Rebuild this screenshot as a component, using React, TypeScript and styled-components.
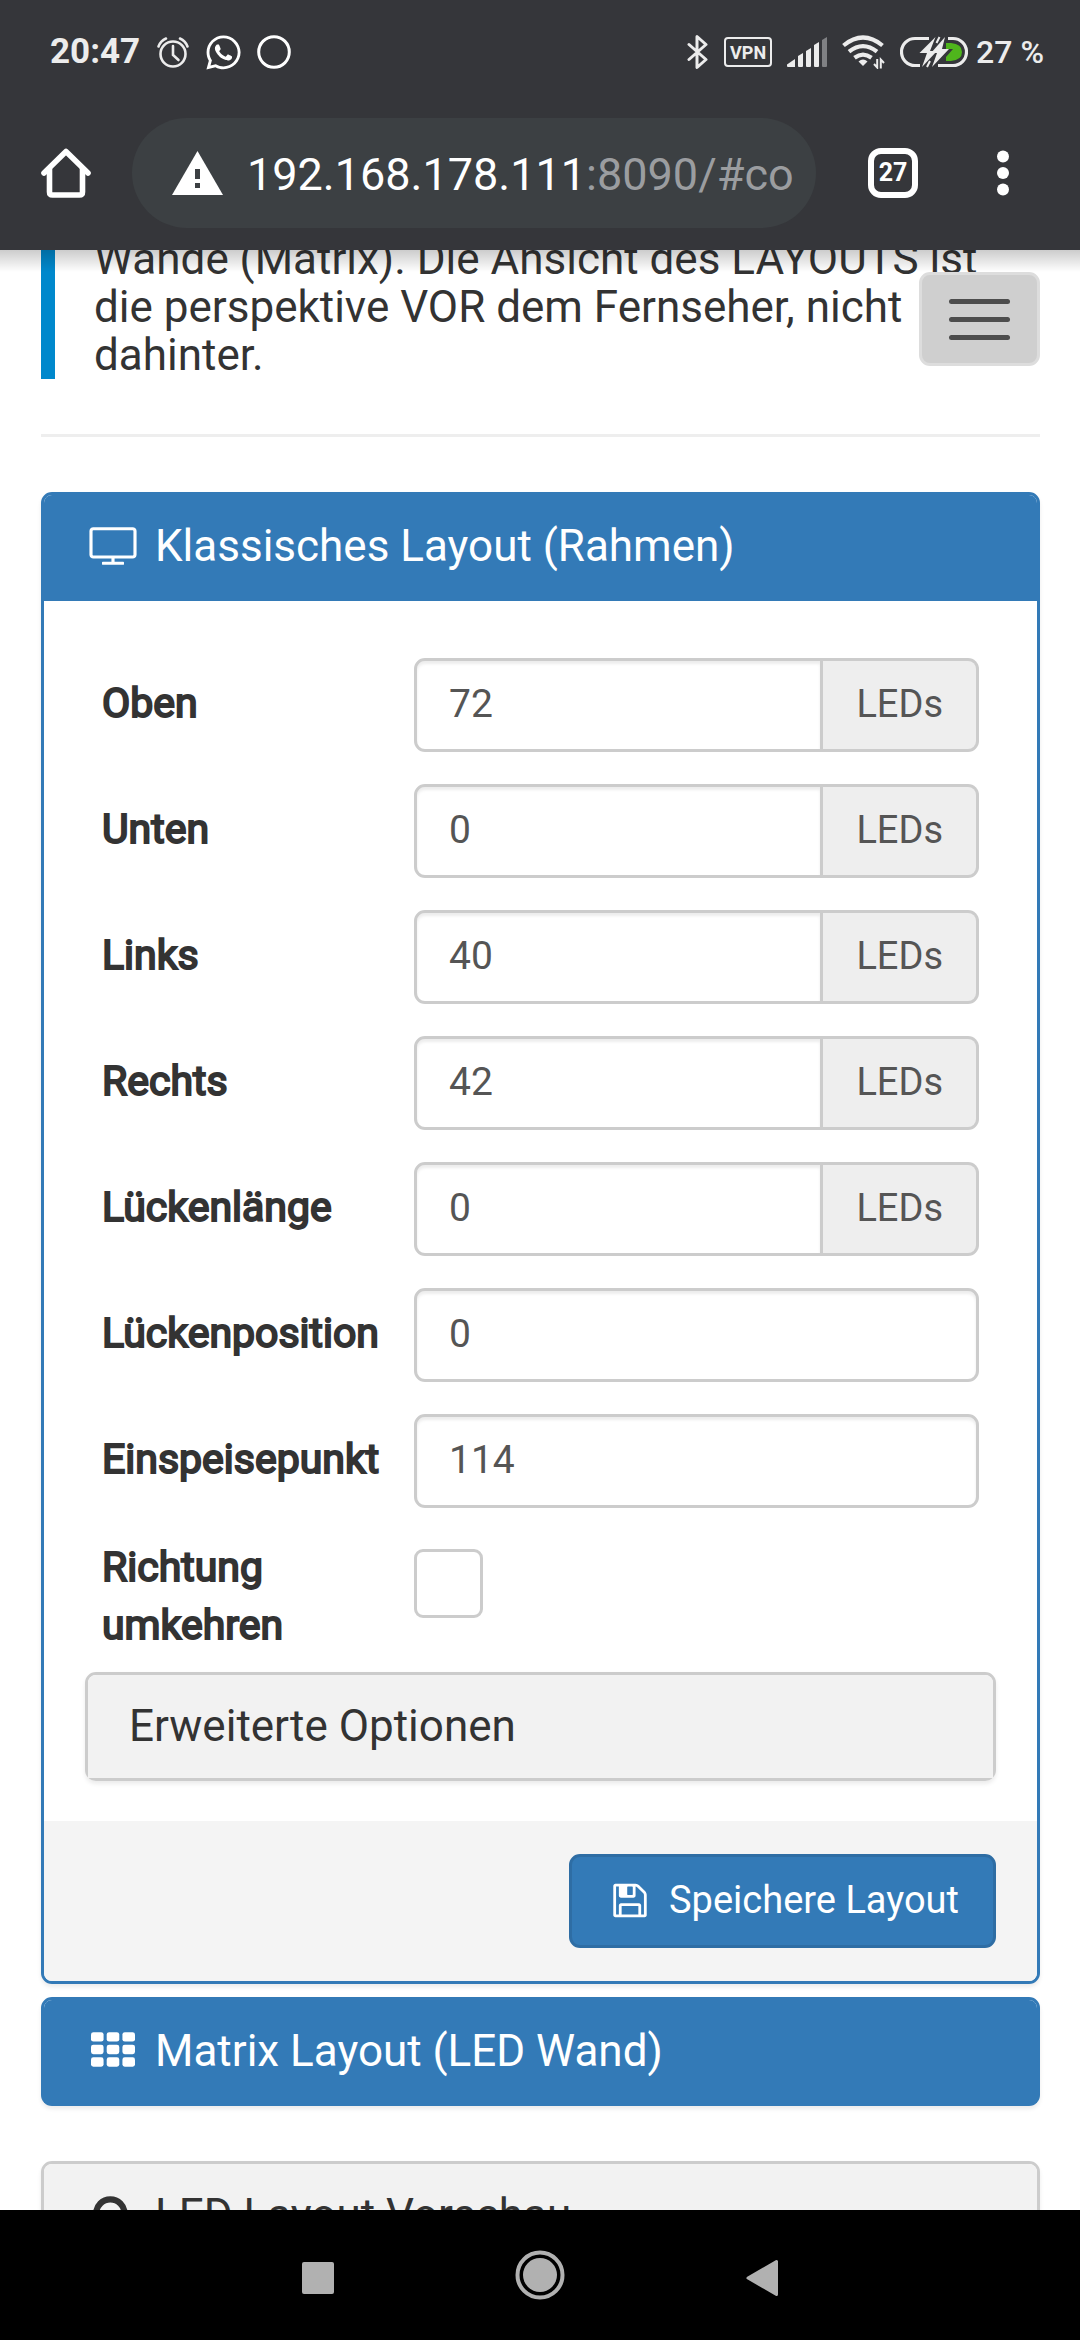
import React from 'react';
import styled, { createGlobalStyle } from 'styled-components';
import { FaWhatsapp } from 'react-icons/fa';

const GlobalStyle = createGlobalStyle`
  *, *::before, *::after { box-sizing: border-box; }
  html, body { margin: 0; background: #fff; }
  body { font-family: Roboto, "Liberation Sans", sans-serif; color: #333; }
  button, input { font: inherit; color: inherit; margin: 0; }
  button { border: 0; padding: 0; background: none; text-align: left; cursor: pointer; }
  svg { display: block; flex: none; }
`;

const Screen = styled.div`
  display: flex;
  flex-direction: column;
  height: 100vh;
  overflow: hidden;
`;

const BrowserHeader = styled.header`
  position: relative;
  z-index: 2;
  flex: none;
  background: #35363a;
  color: #fff;

  &::after {
    content: '';
    position: absolute;
    top: 100%;
    left: 0;
    right: 0;
    height: 22px;
    background: linear-gradient(rgba(0, 0, 0, 0.2), rgba(0, 0, 0, 0));
    pointer-events: none;
  }
`;

const StatusBar = styled.div`
  display: flex;
  align-items: center;
  justify-content: space-between;
  height: 104px;
  padding: 0 36px 0 50px;
  color: #ececec;
`;

const StatusGroup = styled.div<{ $gap: number }>`
  display: flex;
  align-items: center;
  gap: ${(p) => p.$gap}px;
`;

const Clock = styled.span`
  font-size: 35px;
  line-height: 40px;
  font-weight: 700;
`;

const BatteryLevel = styled.span`
  font-size: 32px;
  line-height: 40px;
  font-weight: 500;
`;

const VpnBadge = styled.span`
  display: flex;
  align-items: center;
  justify-content: center;
  width: 48px;
  height: 30px;
  border: 2px solid #ececec;
  border-radius: 4px;
  font-size: 18px;
  font-weight: 700;
`;

const BatteryGroup = styled.div`
  display: flex;
  align-items: center;
  gap: 8px;
`;

const Toolbar = styled.div`
  display: flex;
  align-items: center;
  padding: 14px 40px 22px;
`;

const IconButton = styled.button`
  flex: none;
  color: #fff;
`;

const AddressBar = styled.button`
  flex: 1;
  min-width: 0;
  display: flex;
  align-items: center;
  gap: 24px;
  height: 110px;
  margin: 0 52px 0 40px;
  padding: 0 20px 0 40px;
  border-radius: 55px;
  background: #3c4043;
  color: #fff;
  font-size: 45px;
  line-height: 56px;
  white-space: nowrap;
`;

const AddressText = styled.span`
  padding-top: 3px;
`;

const AddressPath = styled.span`
  color: #9b9da0;
`;

const TabCounter = styled.button`
  flex: none;
  width: 50px;
  height: 50px;
  border: 6px solid #fff;
  border-radius: 13px;
  margin-right: 48px;
  text-align: center;
  font-size: 25px;
  line-height: 38px;
  font-weight: 700;
  color: #fff;
`;

const Viewport = styled.main`
  position: relative;
  flex: 1;
  min-height: 0;
  overflow: hidden;
  padding: 0 40px 0 41px;
`;

const Callout = styled.p`
  margin: -15px 0 0;
  padding: 0 40px 0 39px;
  border-left: 14px solid #0088cc;
  font-size: 44px;
  line-height: 48px;
`;

const Divider = styled.hr`
  height: 3px;
  margin: 55px 0;
  border: 0;
  background: #eee;
`;

const MenuToggle = styled.button`
  position: absolute;
  top: 22px;
  right: 40px;
  display: flex;
  flex-direction: column;
  align-items: center;
  justify-content: center;
  gap: 13px;
  width: 121px;
  height: 94px;
  border: 3px solid #ddd;
  border-radius: 11px;
  background: #cfcfcf;
`;

const MenuBar = styled.span`
  width: 61px;
  height: 5px;
  border-radius: 3px;
  background: #4d4d4d;
`;

type Tone = 'primary' | 'plain';

const tones = {
  primary: { line: '#337ab7', fill: '#337ab7', text: '#fff' },
  plain: { line: '#ccc', fill: '#f2f2f2', text: '#333' },
};

const Panel = styled.section<{ $tone: Tone; $gap?: number }>`
  margin-bottom: ${(p) => p.$gap ?? 0}px;
  border: 3px solid ${(p) => tones[p.$tone].line};
  border-radius: 11px;
  background: #fff;
  box-shadow: 0 3px 4px rgba(0, 0, 0, 0.08);
`;

const PanelHeading = styled.h2<{ $tone: Tone; $open?: boolean }>`
  margin: 0;
  border-bottom: ${(p) => (p.$open ? 3 : 0)}px solid ${(p) => tones[p.$tone].line};
  border-radius: 8px 8px 0 0;
  background: ${(p) => tones[p.$tone].fill};
  color: ${(p) => tones[p.$tone].text};
  font-size: 44px;
  line-height: 48px;
  font-weight: 400;
`;

const PanelToggle = styled.button`
  display: flex;
  align-items: center;
  gap: 14px;
  width: 100%;
  padding: 27px 41px 28px;
`;

const HeadingIcon = styled.span`
  display: flex;
  justify-content: center;
  width: 56px;
  height: 44px;
`;

const PanelBody = styled.div`
  padding: 41px 41px 40px;
`;

const FormRow = styled.div`
  display: grid;
  grid-template-columns: 312px minmax(0, 1fr);
  align-items: center;
  padding: 16px 17px;
`;

const FieldLabel = styled.label`
  margin: -2px 0 2px;
  font-size: 41px;
  line-height: 58px;
  -webkit-text-stroke: 2px #333;
`;

const InputGroup = styled.div`
  display: flex;
  height: 94px;
`;

const NumberInput = styled.input<{ $joined: boolean }>`
  flex: 1;
  min-width: 0;
  width: 100%;
  padding: 0 32px 2px;
  border: 3px solid #ccc;
  border-radius: ${(p) => (p.$joined ? '11px 0 0 11px' : '11px')};
  background: #fff;
  box-shadow: inset 0 3px 3px rgba(0, 0, 0, 0.075);
  color: #555;
  font-size: 39px;
  outline: none;
`;

const Unit = styled.span`
  flex: none;
  display: flex;
  align-items: center;
  padding: 0 33px 3px;
  border: 3px solid #ccc;
  border-left: 0;
  border-radius: 0 11px 11px 0;
  background: #eee;
  color: #555;
  font-size: 38px;
`;

const Checkbox = styled.input`
  appearance: none;
  align-self: start;
  width: 69px;
  height: 69px;
  margin: 9px 0 0;
  border: 3px solid #ccc;
  border-radius: 9px;
  background: #fff;

  &:checked { background: #337ab7; }
`;

const PanelFooter = styled.div`
  display: flex;
  justify-content: flex-end;
  padding: 33px 41px;
  border-radius: 0 0 8px 8px;
  background: #f4f4f4;
`;

const SaveButton = styled.button`
  display: flex;
  align-items: center;
  gap: 22px;
  height: 94px;
  padding: 0 34px 2px 41px;
  border: 3px solid #2e6da4;
  border-radius: 11px;
  background: #337ab7;
  color: #fff;
  font-size: 38px;
`;

const NavBar = styled.nav`
  flex: none;
  display: flex;
  justify-content: center;
  height: 130px;
  background: #000;
`;

const NavButton = styled.button`
  display: flex;
  align-items: center;
  justify-content: center;
  width: 222px;
  color: #b1b1b1;
`;

const AlarmIcon = () => (
  <svg width="36" height="34" viewBox="-2 0 36 34" fill="none" stroke="#ececec" strokeWidth="2.6" strokeLinecap="round">
    <circle cx="17" cy="19" r="12.5" />
    <path d="M17 11v9l5.5 5M2.5 11.5c1.5-4 4-6.500 7.500-8M31.500 11.500c-1.500-4-4-6.500-7.500-8" />
  </svg>
);

const RingIcon = () => (
  <svg width="34" height="34" viewBox="0 0 34 34" fill="none" stroke="#fff" strokeWidth="3">
    <circle cx="17" cy="17" r="15.300" />
  </svg>
);

const BluetoothIcon = () => (
  <svg width="22" height="36" viewBox="0 0 22 36" fill="none" stroke="#ececec" strokeWidth="3" strokeLinejoin="round" strokeLinecap="round">
    <path d="M2 10.500l17 15-9 8v-31l9 8-17 15" />
  </svg>
);

const SignalIcon = () => (
  <svg width="40" height="30" viewBox="0 0 40 30" fill="#ececec">
    <path d="M0 27.500l8-5.500v8H1q-1 0-1-1z" />
    <path d="M11 19l5-3v13q0 1-1 1h-3q-1 0-1-1z" />
    <path d="M19 14l5-3v18q0 1-1 1h-3q-1 0-1-1z" />
    <path d="M27 8l5-3v24q0 1-1 1h-3q-1 0-1-1z" />
    <path d="M35 3l5-3v29q0 1-1 1h-3q-1 0-1-1z" fill="#808184" />
  </svg>
);

const WifiIcon = () => (
  <svg width="43" height="34" viewBox="0 0 43 34" fill="none" stroke="#ececec" strokeWidth="4.200">
    <path d="M1.500 10.500Q21 -5.500 40.500 10.500M7 16.700Q21 5.500 35 16.700M12.500 22.800Q21 16.500 29.500 22.800" />
    <path d="M21 31l-4.500-4.500q4.500-4 9 0z" fill="#ececec" stroke="none" />
    <path d="M35.200 24v8.500l-3.200-3.500M38.800 33.500v-9l3.200 3.500" strokeWidth="2" />
  </svg>
);

const BatteryIcon = () => (
  <svg width="68" height="32" viewBox="0 0 68 32" fill="none">
    <path d="M20 29.500H15A13.500 13.500 0 0 1 15 2.500H29M48 2.500h5a13.500 13.500 0 0 1 0 27H38" stroke="#ececec" strokeWidth="3.200" />
    <path d="M46 7h5q11 1 11 9t-11 9h-5v-4l7-8h-7z" fill="#4fb51c" />
    <path d="M35.500 1L19.500 17h7.500l-5 14 15-16h-7z" fill="#ececec" />
    <path d="M45 1L31 17h6l-5 14 17-18h-7z" fill="#ececec" />
    <path d="M39.500 1l-3 6M30 25l-3 6" stroke="#ececec" strokeWidth="2" />
  </svg>
);

const HomeIcon = () => (
  <svg width="52" height="52" viewBox="0 0 52 52" fill="none" stroke="#fff" strokeWidth="5.600" strokeLinejoin="round" strokeLinecap="round">
    <path d="M4 26L26 4.500 48 26" />
    <path d="M9.500 22v23q0 3 3 3h27q3 0 3-3V22" />
  </svg>
);

const WarningIcon = () => (
  <svg width="51" height="44" viewBox="0 0 51 44">
    <path d="M25.500 0L51 44H0z" fill="#fff" />
    <path d="M23 18h5v10h-5zM23 32h5v5h-5z" fill="#3c4043" />
  </svg>
);

const MoreIcon = () => (
  <svg width="74" height="50" viewBox="0 0 74 50" fill="#fff">
    <circle cx="37" cy="8.500" r="6" />
    <circle cx="37" cy="25" r="6" />
    <circle cx="37" cy="41.500" r="6" />
  </svg>
);

const TelevisionIcon = () => (
  <svg width="48" height="44" viewBox="0 0 1920 1792" fill="currentColor">
    <path d="M1792 1248v-960q0-13-9.5-22.5t-22.5-9.5h-1600q-13 0-22.5 9.5t-9.5 22.5v960q0 13 9.5 22.5t22.5 9.5h1600q13 0 22.5-9.5t9.5-22.5zM1920 288v960q0 66-47 113t-113 47h-736v128h352q14 0 23 9t9 23v64q0 14-9 23t-23 9h-832q-14 0-23-9t-9-23v-64q0-14 9-23t23-9h352v-128h-736q-66 0-113-47t-47-113v-960q0-66 47-113t113-47h1600q66 0 113 47t47 113z" />
  </svg>
);

const GridIcon = () => (
  <svg width="44" height="44" viewBox="0 0 1792 1792" fill="currentColor">
    {[128, 640, 1152].map((y) =>
      [0, 640, 1280].map((x) => <rect key={`${x}-${y}`} x={x} y={y} width="512" height="384" rx="96" />)
    )}
  </svg>
);

const SearchIcon = () => (
  <svg width="41" height="44" viewBox="0 0 1664 1792" fill="none" stroke="currentColor" strokeWidth="256">
    <circle cx="704" cy="832" r="576" />
    <path d="M1110 1238l420 420" strokeLinecap="round" />
  </svg>
);

const FloppyIcon = () => (
  <svg width="34" height="39" viewBox="0 0 1536 1792" fill="currentColor">
    <path d="M384 1536h768v-384h-768v384zM1280 1536h128v-896q0-14-10-38.5t-20-34.5l-281-281q-10-10-34-20t-39-10v416q0 40-28 68t-68 28h-576q-40 0-68-28t-28-68v-416h-128v1280h128v-416q0-40 28-68t68-28h832q40 0 68 28t28 68v416zM896 608v-320q0-13-9.5-22.5t-22.5-9.5h-192q-13 0-22.5 9.5t-9.5 22.5v320q0 13 9.5 22.5t22.5 9.5h192q13 0 22.5-9.5t9.5-22.5zM1536 640v928q0 40-28 68t-68 28h-1344q-40 0-68-28t-28-68v-1344q0-40 28-68t68-28h928q40 0 88 20t76 48l280 280q28 28 48 76t20 88z" />
  </svg>
);

const fields = [
  { id: 'top', label: 'Oben', value: '72', unit: 'LEDs' },
  { id: 'bottom', label: 'Unten', value: '0', unit: 'LEDs' },
  { id: 'left', label: 'Links', value: '40', unit: 'LEDs' },
  { id: 'right', label: 'Rechts', value: '42', unit: 'LEDs' },
  { id: 'gap-length', label: 'Lückenlänge', value: '0', unit: 'LEDs' },
  { id: 'gap-position', label: 'Lückenposition', value: '0' },
  { id: 'input-position', label: 'Einspeisepunkt', value: '114' },
];

export default function App() {
  return (
    <Screen>
      <GlobalStyle />
      <BrowserHeader>
        <StatusBar>
          <StatusGroup $gap={14}>
            <Clock>20:47</Clock>
            <AlarmIcon />
            <FaWhatsapp size={39} color="#fff" />
            <RingIcon />
          </StatusGroup>
          <StatusGroup $gap={15}>
            <BluetoothIcon />
            <VpnBadge>VPN</VpnBadge>
            <SignalIcon />
            <WifiIcon />
            <BatteryGroup>
              <BatteryIcon />
              <BatteryLevel>27 %</BatteryLevel>
            </BatteryGroup>
          </StatusGroup>
        </StatusBar>
        <Toolbar>
          <IconButton aria-label="Startseite">
            <HomeIcon />
          </IconButton>
          <AddressBar aria-label="Adresse">
            <WarningIcon />
            <AddressText>
              192.168.178.111<AddressPath>:8090/#co</AddressPath>
            </AddressText>
          </AddressBar>
          <TabCounter aria-label="Offene Tabs">27</TabCounter>
          <IconButton aria-label="Mehr">
            <MoreIcon />
          </IconButton>
        </Toolbar>
      </BrowserHeader>

      <Viewport>
        <Callout>
          Wände (Matrix). Die Ansicht des LAYOUTS ist die perspektive VOR dem Fernseher, nicht dahinter.
        </Callout>
        <Divider />

        <Panel $tone="primary" $gap={13}>
          <PanelHeading $tone="primary" $open>
            <PanelToggle aria-expanded="true">
              <HeadingIcon><TelevisionIcon /></HeadingIcon>
              Klassisches Layout (Rahmen)
            </PanelToggle>
          </PanelHeading>
          <PanelBody>
            {fields.map((f) => (
              <FormRow key={f.id}>
                <FieldLabel htmlFor={f.id}>{f.label}</FieldLabel>
                <InputGroup>
                  <NumberInput id={f.id} inputMode="numeric" defaultValue={f.value} $joined={Boolean(f.unit)} />
                  {f.unit && <Unit>{f.unit}</Unit>}
                </InputGroup>
              </FormRow>
            ))}
            <FormRow>
              <FieldLabel htmlFor="reverse">Richtung umkehren</FieldLabel>
              <Checkbox id="reverse" type="checkbox" />
            </FormRow>
            <Panel $tone="plain">
              <PanelHeading $tone="plain">
                <PanelToggle aria-expanded="false">Erweiterte Optionen</PanelToggle>
              </PanelHeading>
            </Panel>
          </PanelBody>
          <PanelFooter>
            <SaveButton>
              <FloppyIcon />
              Speichere Layout
            </SaveButton>
          </PanelFooter>
        </Panel>

        <Panel $tone="primary" $gap={55}>
          <PanelHeading $tone="primary">
            <PanelToggle aria-expanded="false">
              <HeadingIcon><GridIcon /></HeadingIcon>
              Matrix Layout (LED Wand)
            </PanelToggle>
          </PanelHeading>
        </Panel>

        <Panel $tone="plain">
          <PanelHeading $tone="plain">
            <PanelToggle aria-expanded="true">
              <HeadingIcon><SearchIcon /></HeadingIcon>
              LED Layout Vorschau
            </PanelToggle>
          </PanelHeading>
        </Panel>

        <MenuToggle aria-label="Menü">
          <MenuBar />
          <MenuBar />
          <MenuBar />
        </MenuToggle>
      </Viewport>

      <NavBar>
        <NavButton aria-label="Übersicht">
          <svg width="32" height="44" viewBox="0 0 32 44" fill="currentColor">
            <rect x="0" y="9" width="32" height="32" rx="2" />
          </svg>
        </NavButton>
        <NavButton aria-label="Home">
          <svg width="50" height="50" viewBox="0 0 50 50" fill="currentColor">
            <circle cx="25" cy="25" r="17" />
            <circle cx="25" cy="25" r="22.500" fill="none" stroke="currentColor" strokeWidth="4" />
          </svg>
        </NavButton>
        <NavButton aria-label="Zurück">
          <svg width="32" height="44" viewBox="0 0 32 44" fill="currentColor" stroke="currentColor" strokeWidth="3" strokeLinejoin="round">
            <path d="M30.500 8.500v33L2 25z" />
          </svg>
        </NavButton>
      </NavBar>
    </Screen>
  );
}
